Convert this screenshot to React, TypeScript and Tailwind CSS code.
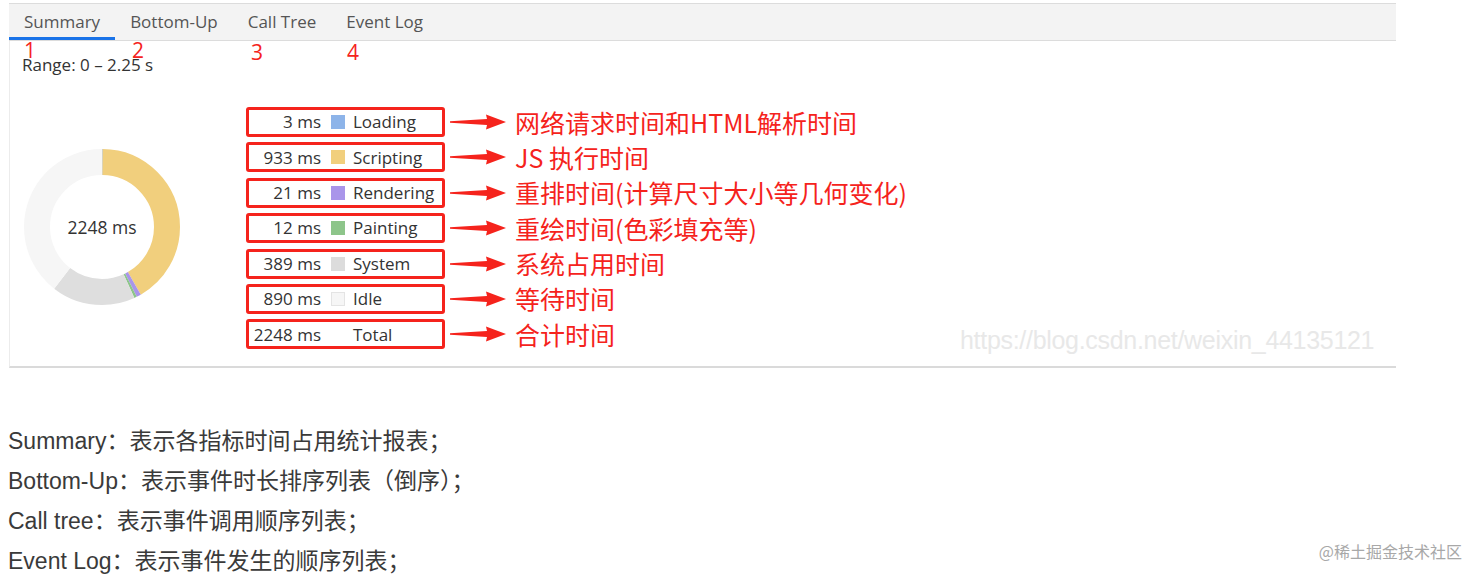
import React from "react";

const segments = [
  { ms: 3, color: "#8db4e9" },
  { ms: 933, color: "#f1cf7d" },
  { ms: 21, color: "#a995ea" },
  { ms: 12, color: "#8dc58a" },
  { ms: 389, color: "#dedede" },
  { ms: 890, color: "#f6f6f6" },
];

const rows = [
  { value: "3 ms", color: "#8db4e9", label: "Loading", note: "网络请求时间和HTML解析时间" },
  { value: "933 ms", color: "#f1cf7d", label: "Scripting", note: "JS 执行时间" },
  { value: "21 ms", color: "#a995ea", label: "Rendering", note: "重排时间(计算尺寸大小等几何变化)" },
  { value: "12 ms", color: "#8dc58a", label: "Painting", note: "重绘时间(色彩填充等)" },
  { value: "389 ms", color: "#dcdcdc", label: "System", note: "系统占用时间" },
  { value: "890 ms", color: "#f6f6f6", label: "Idle", note: "等待时间" },
  { value: "2248 ms", color: "", label: "Total", note: "合计时间" },
];

const tabs = ["Summary", "Bottom-Up", "Call Tree", "Event Log"];

function Donut() {
  const r = 65;
  const c = 2 * Math.PI * r;
  const total = 2248;
  let acc = 0;
  return (
    <div className="relative w-[156px] h-[156px]">
      <svg width="156" height="156" viewBox="0 0 156 156">
        <g transform="rotate(-90 78 78)">
          {segments.map((s, i) => {
            const len = (s.ms / total) * c;
            const el = (
              <circle
                key={i}
                cx="78"
                cy="78"
                r={r}
                fill="none"
                stroke={s.color}
                strokeWidth="26"
                strokeDasharray={`${len} ${c - len}`}
                strokeDashoffset={-acc}
              />
            );
            acc += len;
            return el;
          })}
        </g>
      </svg>
      <div className="absolute inset-0 flex items-center justify-center text-[17.5px] text-[#333] font-['Open_Sans',sans-serif]">
        2248 ms
      </div>
    </div>
  );
}

function Arrow() {
  return (
    <svg width="58" height="18" viewBox="0 0 58 18" className="shrink-0">
      <path d="M1 8.2 L38 6 L37 1.5 L57 9 L37 16.5 L38 12 L1 9.8 Z" fill="#f5231c" />
    </svg>
  );
}

export default function App() {
  return (
    <div className="w-[1480px] h-[583px] bg-white overflow-hidden relative font-['Liberation_Sans','Noto_Sans_CJK_SC',sans-serif]">
      {/* screenshot panel */}
      <div className="pt-[3px] pl-[9px] w-[1396px] relative">
        <div className="h-[38px] bg-[#f3f3f3] border-t border-[#dcdcdc] border-b border-[#cfcfcf] flex items-stretch font-['Open_Sans',sans-serif] text-[17px] text-[#555]">
          {tabs.map((t, i) => (
            <div
              key={t}
              className={
                i === 0
                  ? "px-[15px] flex items-center border-b-[3px] border-[#1a73e8] pt-[3px]"
                  : "px-[15px] flex items-center border-b-[3px] border-transparent pt-[3px]"
              }
            >
              {t}
            </div>
          ))}
        </div>

        {/* red tab numbers */}
        <div className="absolute top-[40px] left-[24px] text-[#f5231c] text-[21px] font-['Open_Sans',sans-serif] leading-none">1</div>
        <div className="absolute top-[40px] left-[132px] text-[#f5231c] text-[21px] font-['Open_Sans',sans-serif] leading-none">2</div>
        <div className="absolute top-[42px] left-[251px] text-[#f5231c] text-[21px] font-['Open_Sans',sans-serif] leading-none">3</div>
        <div className="absolute top-[42px] left-[347px] text-[#f5231c] text-[21px] font-['Open_Sans',sans-serif] leading-none">4</div>

        <div className="h-[327px] border-l border-[#ececec] border-b-2 border-b-[#dadada] relative">
          <div className="pl-[12px] pt-[13px] text-[17px] text-[#333] font-['Open_Sans',sans-serif] leading-[22px]">
            Range: 0 – 2.25 s
          </div>
          <div className="flex">
            <div className="pl-[14px] pt-[73px]">
              <Donut />
            </div>
            <div className="ml-[66px] mt-[31px] flex flex-col gap-[5.4px]">
              {rows.map((r) => (
                <div key={r.label} className="flex items-center h-[30px]">
                  <div className="w-[199px] h-[30px] border-[3px] border-[#f5231c] rounded-[3px] flex items-center font-['Open_Sans',sans-serif] text-[17px] text-[#333] shrink-0">
                    <div className="w-[72px] text-right whitespace-nowrap">{r.value}</div>
                    <div className="w-[14px] h-[14px] ml-[10px] mr-[8px] shrink-0" style={{ backgroundColor: r.color || "transparent", border: r.color === "#f6f6f6" ? "1px solid #e4e4e4" : "none" }} />
                    <div className="whitespace-nowrap">{r.label}</div>
                  </div>
                  <div className="ml-[4px]">
                    <Arrow />
                  </div>
                  <div className="ml-[8px] text-[25px] text-[#f5231c] whitespace-nowrap leading-none font-['Noto_Sans_CJK_SC',sans-serif]">
                    {r.note}
                  </div>
                </div>
              ))}
            </div>
          </div>
          <div className="absolute left-[950px] top-[281px] text-[25px] text-[#e8e8e8] font-['Liberation_Sans',sans-serif] tracking-[-0.3px]">
            https://blog.csdn.net/weixin_44135121
          </div>
        </div>
      </div>

      {/* description */}
      <div className="pl-[8px] mt-[53px] text-[23px] leading-[40px] text-[#3a3a3a]">
        <div>Summary：表示各指标时间占用统计报表；</div>
        <div>Bottom-Up：表示事件时长排序列表（倒序）；</div>
        <div>Call tree：表示事件调用顺序列表；</div>
        <div>Event Log：表示事件发生的顺序列表；</div>
      </div>

      <div className="absolute right-[18px] bottom-[20px] text-[16px] text-[#a8a8a8] font-['Noto_Sans_CJK_SC',sans-serif]">
        @稀土掘金技术社区
      </div>
    </div>
  );
}
